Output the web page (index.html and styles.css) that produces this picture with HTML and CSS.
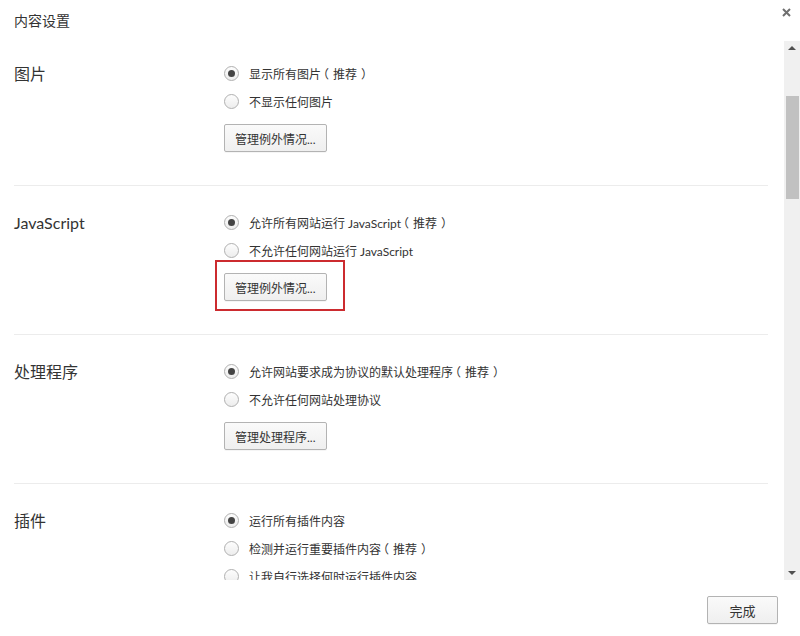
FILE: index.html
```html
<!DOCTYPE html>
<html lang="zh-CN">
<head>
<meta charset="utf-8">
<title>内容设置</title>
<link rel="stylesheet" href="styles.css">
</head>
<body>
<div class="dialog">
  <div class="header">
    <div class="title">内容设置</div>
    <button class="close" aria-label="关闭">
      <svg width="9" height="9" viewBox="0 0 9 9"><path d="M1 1L8 8M8 1L1 8" stroke="#6f6f6f" stroke-width="2" fill="none"/></svg>
    </button>
  </div>
  <div class="body">
    <div class="content">
      <section class="section first">
        <h3 class="heading">图片</h3>
        <div class="options">
          <label class="option"><input type="radio" name="img" checked><span>显示所有图片<span class="lp">（</span>推荐<span class="rp">）</span></span></label>
          <label class="option"><input type="radio" name="img"><span>不显示任何图片</span></label>
          <div class="btn-wrap"><button class="btn">管理例外情况...</button></div>
        </div>
      </section>
      <section class="section">
        <h3 class="heading">JavaScript</h3>
        <div class="options">
          <label class="option"><input type="radio" name="js" checked><span>允许所有网站运行 JavaScript<span class="lp">（</span>推荐<span class="rp">）</span></span></label>
          <label class="option"><input type="radio" name="js"><span>不允许任何网站运行 JavaScript</span></label>
          <div class="btn-wrap"><button class="btn">管理例外情况...</button><span class="highlight"></span></div>
        </div>
      </section>
      <section class="section">
        <h3 class="heading">处理程序</h3>
        <div class="options">
          <label class="option"><input type="radio" name="handler" checked><span>允许网站要求成为协议的默认处理程序<span class="lp">（</span>推荐<span class="rp">）</span></span></label>
          <label class="option"><input type="radio" name="handler"><span>不允许任何网站处理协议</span></label>
          <div class="btn-wrap"><button class="btn">管理处理程序...</button></div>
        </div>
      </section>
      <section class="section">
        <h3 class="heading">插件</h3>
        <div class="options">
          <label class="option"><input type="radio" name="plugin" checked><span>运行所有插件内容</span></label>
          <label class="option"><input type="radio" name="plugin"><span>检测并运行重要插件内容<span class="lp">（</span>推荐<span class="rp">）</span></span></label>
          <label class="option"><input type="radio" name="plugin"><span>让我自行选择何时运行插件内容</span></label>
        </div>
      </section>
    </div>
    <div class="scrollbar">
      <div class="sb-btn"><span class="arrow-up"></span></div>
      <div class="sb-track"><div class="sb-thumb"></div></div>
      <div class="sb-btn"><span class="arrow-down"></span></div>
    </div>
  </div>
  <div class="footer">
    <button class="btn done">完成</button>
  </div>
</div>
</body>
</html>
```
FILE: styles.css
```css
* { box-sizing: border-box; }
html, body { margin: 0; padding: 0; background: #fff; }
body {
  font-family: "Lato", "Noto Sans CJK SC", sans-serif;
  color: #333;
}
.dialog {
  width: 800px;
  height: 636px;
  display: flex;
  flex-direction: column;
  overflow: hidden;
}
.header {
  height: 41px;
  flex: none;
  display: flex;
  justify-content: space-between;
  align-items: flex-start;
  padding-left: 14px;
}
.title {
  font-size: 14px;
  line-height: 41px;
  color: #333;
}
.close {
  border: 0;
  background: none;
  padding: 0;
  margin: 8px 9px 0 0;
  width: 9px;
  height: 9px;
  display: flex;
}
.body {
  height: 539px;
  flex: none;
  display: flex;
}
.content {
  flex: 1;
  overflow: hidden;
  padding: 0 16px 0 14px;
}
.section {
  display: grid;
  grid-template-columns: 210px 1fr;
  padding: 22px 0 33px;
  border-top: 1px solid #ececec;
}
.section.first {
  border-top: 0;
  padding-top: 18px;
}
.heading {
  margin: 0;
  font-size: 16px;
  font-weight: normal;
  line-height: 29px;
  color: #333;
}
.options {
  display: flex;
  flex-direction: column;
  align-items: flex-start;
}
.option {
  height: 28px;
  display: flex;
  align-items: center;
  font-size: 12px;
  color: #333;
  white-space: nowrap;
}
.lp, .rp { font-feature-settings: "halt" 1; }
.lp { padding: 0 4px 0 2px; }
.rp { padding: 0 2px 0 4px; }
.option input {
  appearance: none;
  -webkit-appearance: none;
  margin: 0 10px 0 0;
  width: 15px;
  height: 15px;
  border-radius: 50%;
  border: 1px solid #b0b0b0;
  background: linear-gradient(#fdfdfd, #ededed);
  display: flex;
  align-items: center;
  justify-content: center;
}
.option input:checked::after {
  content: "";
  width: 7px;
  height: 7px;
  border-radius: 50%;
  background: #444;
}
.btn-wrap {
  position: relative;
  margin-top: 9px;
}
.btn {
  font-family: inherit;
  font-size: 12px;
  color: #333;
  height: 28px;
  padding: 0 10px;
  border: 1px solid #b3b3b3;
  border-radius: 2px;
  background: linear-gradient(#fafafa, #efefef);
  box-shadow: 0 1px 0 rgba(0,0,0,0.04);
  display: flex;
  align-items: center;
  justify-content: center;
}
.highlight {
  position: absolute;
  left: -9px;
  top: -13px;
  width: 130px;
  height: 51px;
  border: 2px solid #cc2b2f;
  pointer-events: none;
}
.scrollbar {
  width: 16px;
  flex: none;
  background: #f0f0f0;
  display: flex;
  flex-direction: column;
}
.sb-btn {
  height: 16px;
  flex: none;
  display: flex;
  align-items: center;
  justify-content: center;
}
.arrow-up {
  width: 0; height: 0;
  border-left: 4px solid transparent;
  border-right: 4px solid transparent;
  border-bottom: 4px solid #505050;
  margin-top: -2px;
}
.arrow-down {
  width: 0; height: 0;
  border-left: 4px solid transparent;
  border-right: 4px solid transparent;
  border-top: 4px solid #505050;
  margin-top: 2px;
}
.sb-track {
  flex: 1;
  padding: 39px 1px 0 2px;
}
.sb-thumb {
  height: 103px;
  background: #c1c1c1;
}
.footer {
  flex: 1;
  display: flex;
  justify-content: flex-end;
  align-items: flex-start;
  padding: 16px 22px 0 0;
}
.btn.done {
  min-width: 71px;
  font-size: 13px;
}
```
